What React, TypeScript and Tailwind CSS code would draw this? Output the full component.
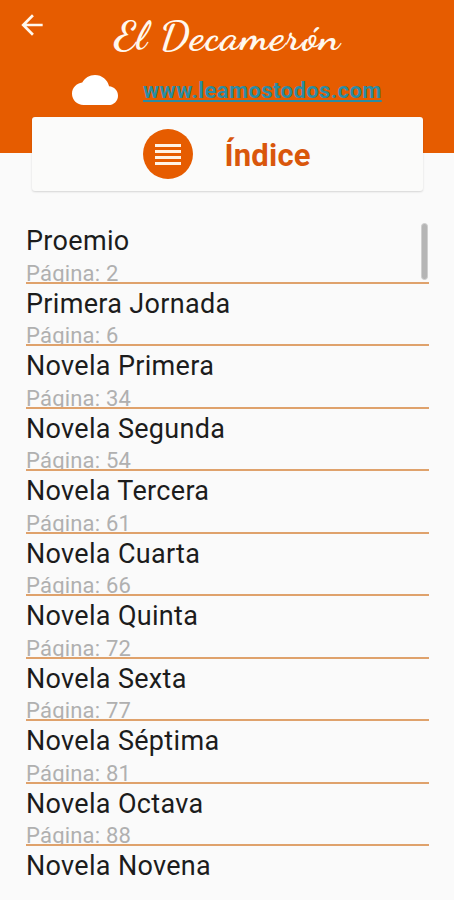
import React from 'react';

const chapters = [
  { title: 'Proemio', page: 2 },
  { title: 'Primera Jornada', page: 6 },
  { title: 'Novela Primera', page: 34 },
  { title: 'Novela Segunda', page: 54 },
  { title: 'Novela Tercera', page: 61 },
  { title: 'Novela Cuarta', page: 66 },
  { title: 'Novela Quinta', page: 72 },
  { title: 'Novela Sexta', page: 77 },
  { title: 'Novela Séptima', page: 81 },
  { title: 'Novela Octava', page: 88 },
  { title: 'Novela Novena', page: null },
];

const Header = () => (
  <header className="h-[153px] bg-[#e65c00]">
    <div className="flex h-[75px]">
      <button aria-label="Volver" className="ml-[16px] mt-[9px] h-8 w-8">
        <svg viewBox="0 0 24 24" className="h-8 w-8" fill="#fff8ee">
          <path d="M20 11H7.83l5.59-5.59L12 4l-8 8 8 8 1.41-1.41L7.83 13H20v-2z" />
        </svg>
      </button>
      <h1 className="ml-[66px] mt-[12px] origin-left scale-x-[1.07] whitespace-nowrap font-['Dancing_Script',cursive] text-[40px] font-bold leading-[48px] tracking-[1px] text-[#fff8ee]">
        El Decamerón
      </h1>
    </div>
    <div className="flex h-[30px] items-center pl-[72px]">
      <svg viewBox="0 4 24 16" className="h-[30px] w-[46px]" preserveAspectRatio="none" fill="#ffffff">
        <path d="M19.35 10.04C18.67 6.59 15.64 4 12 4 9.11 4 6.6 5.64 5.35 8.04 2.34 8.36 0 10.91 0 14c0 3.31 2.69 6 6 6h13c2.76 0 5-2.24 5-5 0-2.64-2.05-4.78-4.65-4.96z" />
      </svg>
      <a
        href="#"
        className="ml-[25px] mt-[2px] font-[Roboto,sans-serif] text-[22px] font-bold leading-[30px] tracking-[0.42px] text-[#2b8ca3] underline"
      >
        www.leamostodos.com
      </a>
    </div>
  </header>
);

const IndexCard = () => (
  <div className="relative mx-auto -mt-[36px] flex h-[74px] w-[391px] items-center rounded-[3px] bg-[#fbfbfa] pl-[111px] shadow-[0_1px_2px_rgba(0,0,0,0.15)]">
    <div className="flex h-[50px] w-[50px] flex-col items-center justify-center gap-[3px] rounded-full bg-[#e65c00]">
      <span className="h-[3px] w-[26px] bg-[#fff3e6]" />
      <span className="h-[3px] w-[26px] bg-[#fff3e6]" />
      <span className="h-[3px] w-[26px] bg-[#fff3e6]" />
      <span className="h-[3px] w-[26px] bg-[#fff3e6]" />
    </div>
    <h2 className="ml-[32px] mt-[3px] font-[Roboto,sans-serif] text-[31px] font-bold leading-[36px] tracking-[0.2px] text-[#d9570c]">
      Índice
    </h2>
  </div>
);

const App = () => {
  return (
    <div className="h-[900px] w-full overflow-hidden bg-[#fafafa] font-[Roboto,sans-serif]">
      <Header />
      <IndexCard />
      <main className="relative ml-[26px] mt-[30px] w-[403px]">
        <ul>
          {chapters.map((chapter) => (
            <li
              key={chapter.title}
              className="h-[62.55px] overflow-hidden border-b-2 border-[#dfa26c] whitespace-nowrap last:border-transparent"
            >
              <div className="pt-[4px] text-[27px] leading-[32px] tracking-[0.32px] text-[#1c1c1c]">{chapter.title}</div>
              {chapter.page !== null && (
                <div className="pt-[3.5px] text-[22px] leading-[26px] tracking-[0.2px] text-[#b0b0b0]">
                  Página: {chapter.page}
                </div>
              )}
            </li>
          ))}
        </ul>
        <div className="absolute right-[1px] top-[2px] h-[57px] w-[7px] rounded-full border border-[#cfcfcf] bg-[#b5b5b5]" />
      </main>
    </div>
  );
};

export default App;
